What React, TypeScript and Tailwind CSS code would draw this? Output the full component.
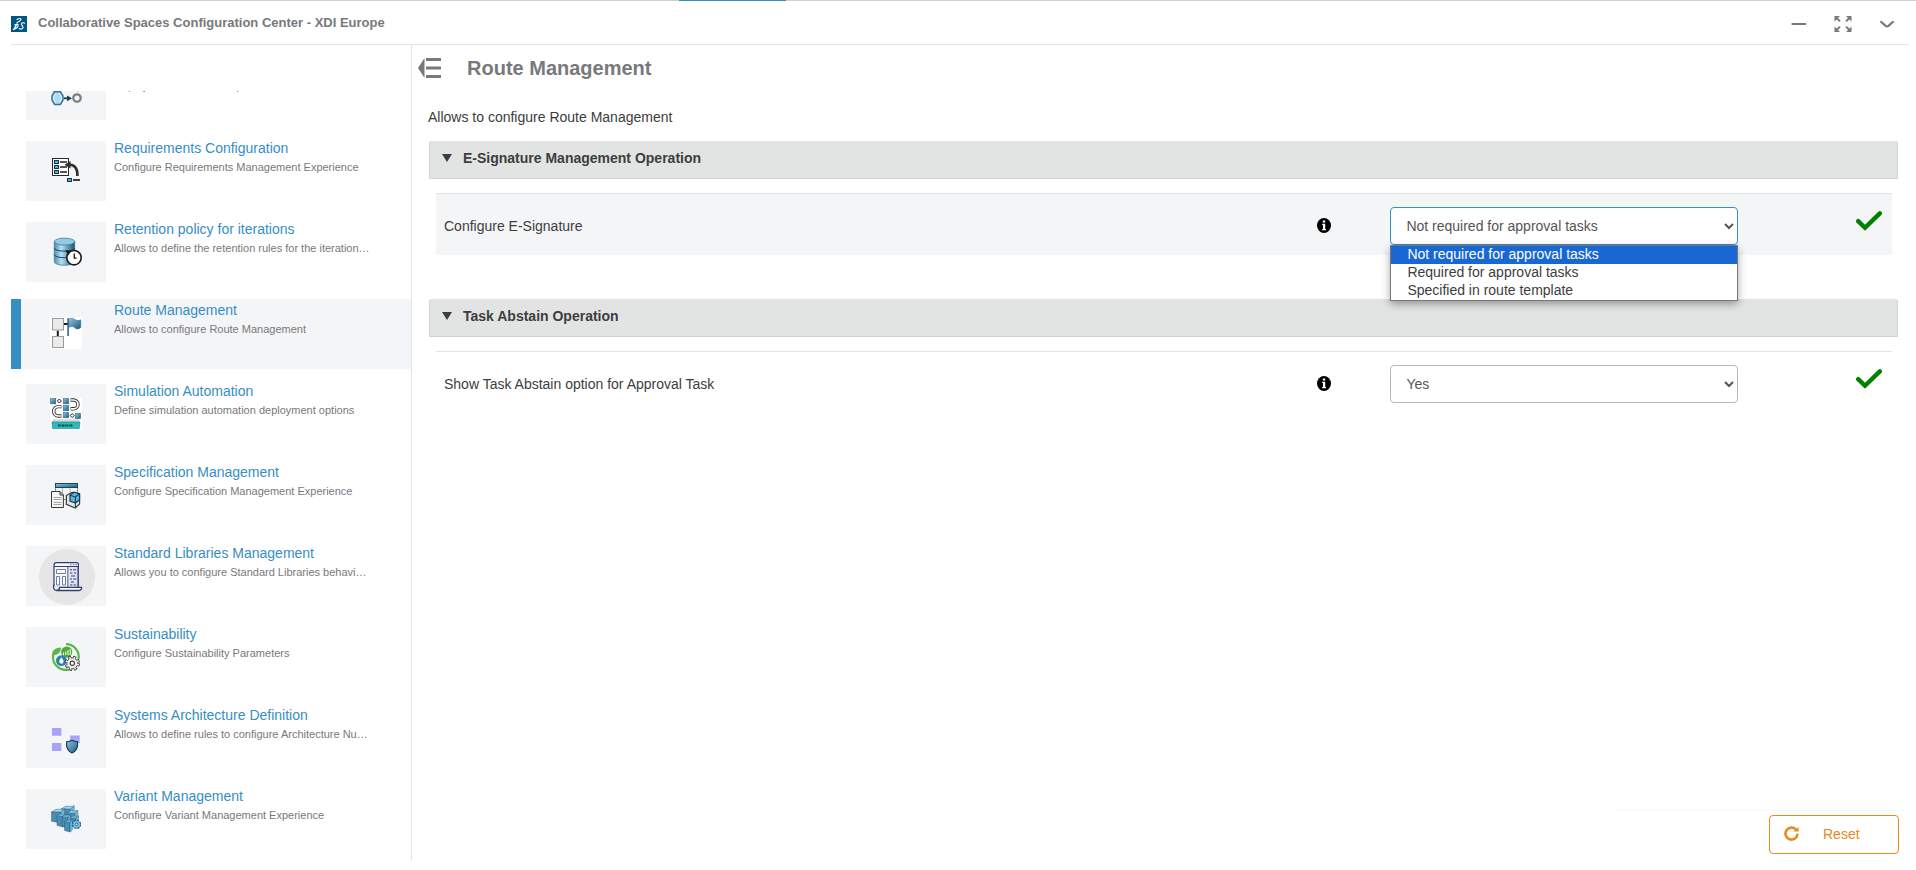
import { useState } from "react";
import type { ReactNode } from "react";

const BlueDefs = ({ id }: { id: string }) => (
  <defs>
    <linearGradient id={id} x1="0" y1="0" x2="1" y2="1">
      <stop offset="0" stopColor="#8fc9e6" />
      <stop offset="1" stopColor="#1f5878" />
    </linearGradient>
  </defs>
);

const Icon32 = ({ children, white }: { children: ReactNode; white?: boolean }) => (
  <svg viewBox="0 0 32 32" aria-hidden="true" className={white ? "size-8 bg-white" : "size-8"}>
    {children}
  </svg>
);

const DeployIcon = () => (
  <Icon32>
    <path d="M4.6 17.8H10.4L13 22V26L10.4 30.4H4.6L2 26V22Z" fill="#a9dcf8" stroke="#41708a" strokeWidth="1.5" />
    <path d="M5.4 19.5 3.8 22.4V25.6L5.4 28.6M9.6 19.5 11.2 22.4V25.6L9.6 28.6" fill="none" stroke="#e6f5fd" strokeWidth="1" />
    <path d="M14 24.3h3.5" stroke="#16405a" strokeWidth="1.8" />
    <path d="M17 21.4 22 24.3 17 27.2Z" fill="#16405a" />
    <circle cx="27" cy="24" r="3.7" fill="#f4f5f6" stroke="#7d7d7d" strokeWidth="2.3" />
    <path d="M3 16.6 4.6 17.8M26.4 16l1.2 1.4" stroke="#555" strokeWidth="1" />
  </Icon32>
);

const RequirementsIcon = () => (
  <Icon32>
    <rect x="2.5" y="3.5" width="16" height="17" fill="#fff" stroke="#2a2a2a" />
    {[5, 10, 15].map((y) => (
      <g key={y}>
        <rect x="4.5" y={y + 0.5} width="4" height="3" fill="#57a9d6" stroke="#12354c" />
        <path d={`M10 ${y + 2}h7`} stroke="#2a2a2a" strokeWidth="1.6" />
      </g>
    ))}
    <path d="M20 9.8C25.5 10.2 27.6 14 27.4 21" fill="none" stroke="#2d2d2d" strokeWidth="2.6" />
    <path d="M14.5 9.8 20.5 6V13.6Z" fill="#2d2d2d" />
    <rect x="17.5" y="23.5" width="4" height="3" fill="#57a9d6" stroke="#12354c" />
    <path d="M23 25h7" stroke="#2a2a2a" strokeWidth="1.8" />
  </Icon32>
);

const RetentionIcon = () => (
  <Icon32>
    <defs>
      <linearGradient id="cylinder">
        <stop offset="0" stopColor="#4f8fb3" />
        <stop offset="0.35" stopColor="#b4e0f5" />
        <stop offset="1" stopColor="#1d4f6e" />
      </linearGradient>
    </defs>
    <path d="M4.3 5.5v20c0 5 20.4 5 20.4 0v-20Z" fill="url(#cylinder)" stroke="#3a6f8e" strokeWidth="0.7" />
    <ellipse cx="14.5" cy="5.6" rx="10.2" ry="3.5" fill="#92cbe8" stroke="#3a6f8e" strokeWidth="0.7" />
    <path d="M4.3 12c0 4.2 20.4 4.2 20.4 0M4.3 18.5c0 4.2 20.4 4.2 20.4 0" fill="none" stroke="#1c4660" strokeWidth="1" />
    <circle cx="24" cy="21.7" r="7.2" fill="#fff" stroke="#1b1b1b" strokeWidth="1.6" />
    <path d="M24.3 17.5v4.6h2.4" fill="none" stroke="#222" strokeWidth="1.4" />
    <path d="M15 14.6 20 14.4 18.8 19.4Z" fill="#1b1b1b" />
  </Icon32>
);

const RouteIcon = () => (
  <Icon32 white>
    <BlueDefs id="flag" />
    <rect x="2.5" y="1.5" width="11" height="11.5" fill="#ebebeb" stroke="#9a9a9a" />
    <rect x="2.5" y="19.5" width="11" height="11" fill="#ebebeb" stroke="#9a9a9a" />
    <path d="M14 7h4M7.8 13.7v5.4" stroke="#1c1c1c" strokeWidth="2" />
    <path d="M18.6 2C21.6 .6 23.4 1.2 25 2.6 26.8 4 28.6 3.8 30.8 2.8V10.4C28.6 12.4 26 12.4 24.6 10.8 23 9 20.6 9 18.6 10.6Z" fill="url(#flag)" stroke="#2b6a8c" strokeWidth="0.5" />
    <path d="M18.1 1.2V19" stroke="#2b6a8c" strokeWidth="1.6" />
  </Icon32>
);

const SimulationIcon = () => (
  <Icon32 white>
    <BlueDefs id="sim" />
    {[[0.3, 0.4], [13.2, 0.4], [13.2, 7.3], [13.2, 14.3], [25.2, 15.2]].map(([x, y]) => (
      <rect key={`${x}-${y}`} x={x} y={y} width="5.5" height="5.5" fill="url(#sim)" stroke="#2b6788" strokeWidth="0.5" />
    ))}
    <path d="M9.3 1 11.3 3 9.3 5 7.3 3ZM22.2 15.6 24.2 17.6 22.2 19.6 20.2 17.6Z" fill="#fff" stroke="#222" strokeWidth="1" />
    <path d="M11.4 8.6H8.4a4.7 4.7 0 0 0 0 9.4h3M20.6 2h3a4.4 4.4 0 0 1 0 8.8h-3" fill="none" stroke="#333" strokeWidth="3.4" />
    <path d="M11 8.6H8.4a4.7 4.7 0 0 0 0 9.4H11M21 2h2.6a4.4 4.4 0 0 1 0 8.8H21" fill="none" stroke="#fff" strokeWidth="1.7" />
    <path d="M3 21.2H29L30 24H2Z" fill="#d5d8d8" />
    <path d="M2 24H30L29.2 30.6H2.6Z" fill="#2bbcb9" stroke="#157c7d" strokeWidth="0.6" />
    <path d="M8 27.5h1.8m.6 0h.9m.6 0h2m.6 0h1.4m.7 0h1.4m.7 0h1m.6 0h2" stroke="#0c3d40" strokeWidth="1.8" />
  </Icon32>
);

const SpecificationIcon = () => (
  <Icon32>
    <BlueDefs id="spec" />
    <rect x="5.5" y="4.5" width="22" height="16" fill="#f3f3f3" stroke="#8b9093" />
    <path d="M12.5 9v11M20 9v11" stroke="#b5b9bb" />
    <rect x="5.5" y="4.5" width="22" height="4" fill="url(#spec)" stroke="#15455f" />
    <path d="M1.5 12.5H10L13.4 16V28.5H1.5Z" fill="#f5f5f5" stroke="#3a3a3a" />
    <path d="M10 12.5V16h3.4" fill="none" stroke="#3a3a3a" />
    <path d="M3.5 18.5h8M3.5 20.5h8M3.5 23.5h8M3.5 25.5h8" stroke="#a3a3a3" />
    <path d="M16.4 16.4 22 13.3 29.6 15V25L25.3 29 16.4 25.4Z" fill="#e6e6e6" stroke="#3c3c3c" strokeWidth="1.2" />
    <path d="M20 16 24 13.2 29.5 14.6V21L25.4 24 20 22Z" fill="#62b5df" stroke="#113f59" strokeWidth="1.2" />
    <path d="M20 16.2 25.4 18 29.5 14.8M25.4 18v6M25.4 24v4.6" fill="none" stroke="#113f59" strokeWidth="1.1" />
  </Icon32>
);

const LibrariesIcon = () => (
  <svg viewBox="0 0 60 60" aria-hidden="true" className="size-[60px]">
    <circle cx="31" cy="31" r="28" fill="#e6e6e6" />
    <path d="M18 40V19.2Q18 16.6 20.4 16.6H40.6Q42.4 16.6 42.4 18.6V41" fill="#f7f8fc" stroke="#2f3e75" strokeWidth="1.2" />
    <path d="M31.6 20.5H42V41H31.6Z" fill="#e3e6f2" />
    <path d="M18 20.5H42.4" stroke="#2f3e75" />
    <path d="M34 18.6h1.6m1 0h1.6m1 0h1.6" stroke="#8b95bd" strokeWidth="1.2" />
    <path d="M20.5 23.5h9v4h-9ZM20.5 30.5h3V39h-3ZM26.5 30.5h3V39h-3Z" fill="#fff" stroke="#6d79a8" />
    <path d="M31.8 21V41M41.6 21v20" stroke="#7884b3" strokeWidth="1.4" />
    <path d="M34 23.8h2m1 0h3M34 27h2.4m1.6 0h2M35 30h4M34 33h2m1.2 0h3M35 36h3M34 39h2.4m1.2 0h2.4" stroke="#2f3e75" strokeWidth="1" />
    <path d="M18 38.5C17 42 18 44.3 20.4 44.4 22.4 44.4 23.6 43.4 23.6 41.4H45.6C45.8 43.6 44.4 44.5 42.4 44.5H20.4" fill="#fff" stroke="#2f3e75" strokeWidth="1.3" />
  </svg>
);

const SustainabilityIcon = () => (
  <Icon32>
    <path d="M16 3.2A12.8 12.8 0 0 1 28.6 18M3.2 14A12.8 12.8 0 0 0 19 28.5" fill="none" stroke="#57b847" strokeWidth="2.2" />
    <path d="M2 16C1.6 9.6 4.4 6.6 11 6.4 11 11 8.4 13.4 4.6 14Z" fill="#57b847" />
    <circle cx="16.7" cy="11" r="5.6" fill="#4caa35" />
    <path d="M13.5 14v-2.4M15.8 14v-3.6M18 14V9.2M20.2 14V8" stroke="#fff" strokeWidth="1" />
    <circle cx="11.4" cy="19.6" r="5.4" fill="#2d80b4" />
    <path d="M11.4 16.2C13.4 19 13.8 20 13.4 21.2A2.1 2.1 0 0 1 9.4 21.2C9 20 9.4 19 11.4 16.2Z" fill="#fff" />
    <circle cx="22.3" cy="22.3" r="6" fill="none" stroke="#444" strokeWidth="3.4" strokeDasharray="2.9 1.812" />
    <circle cx="22.3" cy="22.3" r="5.5" fill="#ededed" stroke="#444" strokeWidth="1" />
    <circle cx="22.3" cy="22.3" r="5.8" fill="none" stroke="#ededed" strokeWidth="2" strokeDasharray="1.5 3.055" strokeDashoffset="-0.7" />
    <circle cx="22.3" cy="22.3" r="2.1" fill="#fff" stroke="#444" strokeWidth="1.2" />
  </Icon32>
);

const SystemsIcon = () => (
  <Icon32>
    <BlueDefs id="shield" />
    <path d="M2 6h9.4v7.8H2ZM2 21h9.4v8H2ZM20.2 13.4h9.5V21h-9.5Z" fill="#a7a3fb" />
    <path d="M16.6 19.8Q19.8 19.6 22 18.2 24.2 19.6 27.6 19.8 28.6 28 22 31 15.6 28 16.6 19.8Z" fill="url(#shield)" stroke="#163f58" strokeWidth="1.1" />
  </Icon32>
);

const Block = ({ x, y, w, h }: { x: number; y: number; w: number; h: number }) => (
  <g stroke="#1d4d68" strokeWidth="0.4">
    <path d={`M${x} ${y}l${w * 0.4} ${-w * 0.25}h${w * 0.8}l${-w * 0.35} ${w * 0.3}Z`} fill="#9ad8f5" />
    <path d={`M${x} ${y}h${w * 0.85}v${h}l${-w * 0.85} ${-h * 0.15}Z`} fill="#4a8db3" />
    <path d={`M${x + w * 0.85} ${y}l${w * 0.35} ${-w * 0.3}v${h}l${-w * 0.35} ${w * 0.3}Z`} fill="#6dbce0" />
  </g>
);

const VariantIcon = () => (
  <Icon32>
    <Block x={11} y={6} w={11} h={10} />
    <Block x={1.5} y={9} w={11} h={11} />
    <Block x={17} y={10} w={9} h={9} />
    <Block x={7} y={13} w={7} h={11} />
    <Block x={12} y={14} w={7} h={11} />
    <Block x={20} y={15} w={7} h={9} />
    <Block x={14.5} y={19} w={6.5} h={10} />
    <circle cx="26.6" cy="21.4" r="4" fill="#7cc8ec" stroke="#235a78" strokeWidth="1.2" strokeDasharray="2.2 0.9" />
    <circle cx="26.6" cy="21.4" r="1.4" fill="#d9eef9" stroke="#143f58" strokeWidth="0.8" />
  </Icon32>
);

type Entry = { title: string; text: string; icon: ReactNode };

const entries: Entry[] = [
  { title: "Product Deployment", text: "Deploy structure relation policies", icon: <DeployIcon /> },
  { title: "Requirements Configuration", text: "Configure Requirements Management Experience", icon: <RequirementsIcon /> },
  { title: "Retention policy for iterations", text: "Allows to define the retention rules for the iterations of objects", icon: <RetentionIcon /> },
  { title: "Route Management", text: "Allows to configure Route Management", icon: <RouteIcon /> },
  { title: "Simulation Automation", text: "Define simulation automation deployment options", icon: <SimulationIcon /> },
  { title: "Specification Management", text: "Configure Specification Management Experience", icon: <SpecificationIcon /> },
  { title: "Standard Libraries Management", text: "Allows you to configure Standard Libraries behavior settings", icon: <LibrariesIcon /> },
  { title: "Sustainability", text: "Configure Sustainability Parameters", icon: <SustainabilityIcon /> },
  { title: "Systems Architecture Definition", text: "Allows to define rules to configure Architecture Numbering", icon: <SystemsIcon /> },
  { title: "Variant Management", text: "Configure Variant Management Experience", icon: <VariantIcon /> },
];

const Sidebar = () => {
  const [selected, setSelected] = useState("Route Management");
  return (
    <nav className="w-[401px] shrink-0 overflow-hidden border-r border-[#e2e4e3] pt-[46px]">
      <div className="h-full overflow-hidden">
        <ul className="-mt-[35px] flex flex-col gap-[11px]">
          {entries.map(({ title, text, icon }) => (
            <li key={title}>
              <a
                href="#"
                onClick={(e) => {
                  e.preventDefault();
                  setSelected(title);
                }}
                className={
                  title === selected
                    ? "flex h-[70px] gap-2 border-l-10 border-[#368ec4] bg-[#f4f5f7] pt-1 pl-[5px]"
                    : "flex h-[70px] gap-2 border-l-10 border-transparent pt-1 pl-[5px]"
                }
              >
                <span className="flex h-[60px] w-20 shrink-0 items-center justify-center bg-[#f4f5f7]">{icon}</span>
                <span className="flex w-[256px] flex-col">
                  <span className="-mt-[3px] text-sm/5 text-[#368ec4]">{title}</span>
                  <span className="truncate text-[11px]/[18px] text-[#77797c]">{text}</span>
                </span>
              </a>
            </li>
          ))}
        </ul>
      </div>
    </nav>
  );
};

const InfoIcon = () => (
  <svg viewBox="0 0 14 15" role="img" aria-label="Information" className="h-[15px] w-3.5">
    <ellipse cx="7" cy="7.5" rx="7" ry="7.5" fill="#000" />
    <path d="M5.8 2.6h2.4v2H5.8ZM5.2 5.8h3v5.2h.8v1.2H5.2V11H6V7h-.8Z" fill="#fff" />
  </svg>
);

const CheckIcon = () => (
  <svg viewBox="0 0 26 20" role="img" aria-label="Saved" className="h-5 w-[26px]">
    <path d="M2.2 10.2 9 16.8 23.8 2.4" fill="none" stroke="#008000" strokeWidth="4.4" strokeLinecap="round" />
  </svg>
);

type SettingProps = {
  heading: string;
  id: string;
  label: string;
  options: string[];
  opened?: boolean;
};

const Setting = ({ heading, id, label, options, opened }: SettingProps) => {
  const [open, setOpen] = useState(!!opened);
  const [value, setValue] = useState(options[0]);
  return (
    <section>
      <h2>
        <button
          type="button"
          className="flex h-[38px] w-full items-start gap-[11px] rounded-t-[3px] border-x border-b border-[#d1d4d4] bg-[#e2e4e3] pt-[7px] pl-3 text-left text-sm/5 font-bold text-[#3d3d3d]"
        >
          <svg viewBox="0 0 10 8" aria-hidden="true" className="mt-1.5 h-2 w-2.5">
            <path d="M0 0h10L5 8Z" fill="#3d3d3d" />
          </svg>
          {heading}
        </button>
      </h2>
      <div
        className={
          opened
            ? "mt-3.5 mr-1.5 ml-[7px] grid grid-cols-[60%_5%_25%_10%] border-t border-[#e2e4e3] bg-[#f4f5f7] pt-[13px] pb-2.5"
            : "mt-3.5 mr-1.5 ml-[7px] grid grid-cols-[60%_5%_25%_10%] border-t border-[#e2e4e3] pt-[13px] pb-2.5"
        }
      >
        <label htmlFor={id} className="flex items-center px-2">
          {label}
        </label>
        <div className="flex items-center px-[7px] pb-px">
          <InfoIcon />
        </div>
        <div className="relative px-2">
          <select
            id={id}
            value={value}
            onChange={(e) => setValue(e.target.value)}
            className={
              opened
                ? "block h-[38px] w-full rounded-[4px] border border-[#368ec4] bg-white px-[11px] text-[#555]"
                : "block h-[38px] w-full rounded-[4px] border border-[#b4b6ba] bg-white px-[11px] text-[#555]"
            }
          >
            {options.map((o) => (
              <option key={o}>{o}</option>
            ))}
          </select>
          {open && (
            <ul
              role="listbox"
              aria-label={label}
              className="absolute inset-x-2 top-full border border-[#767676] bg-white text-sm/4 shadow-[0_3px_8px_rgba(0,0,0,0.35)]"
            >
              {options.map((o) => (
                <li
                  key={o}
                  role="option"
                  aria-selected={o === value}
                  onClick={() => {
                    setValue(o);
                    setOpen(false);
                  }}
                  className={o === value ? "bg-[#1967d2] px-4 pb-0.5 text-white" : "px-4 pb-0.5"}
                >
                  {o}
                </li>
              ))}
            </ul>
          )}
        </div>
        <div className="flex justify-end pt-1 pr-2.5">
          <CheckIcon />
        </div>
      </div>
    </section>
  );
};

export default function App() {
  return (
    <div className="flex h-screen flex-col bg-white pb-2.5 font-['Liberation_Sans',Arial,sans-serif] text-sm text-[#3d3d3d]">
      <div className="flex h-px shrink-0 bg-[#ced1d1]">
        <div className="ml-[679px] w-[107px] bg-[#368ec4]" />
      </div>
      <header className="mr-[7px] ml-[11px] flex h-11 shrink-0 items-center gap-[11px] border-b border-[#e2e4e3] pt-0.5 text-[#77797c]">
        <svg viewBox="0 0 16 16" aria-hidden="true" className="size-4">
          <rect width="16" height="16" fill="#005686" />
          <path
            d="M6 3.4C8.4 2 10.6 2.4 9.8 3.8 9.2 5 7.6 6 6 6.6M2.4 13.4C5.4 12.8 7.6 10.4 7.2 9 6.8 7.8 5 8 3.8 9M5.8 8.4 2.8 13.4M13.6 7.2C12.2 6.2 10.2 6.8 10.4 8.2 10.6 9.6 12.6 10 12 11.8 11.4 13.2 9.4 13.4 8.2 12.6"
            fill="none"
            stroke="#fff"
            strokeWidth="1.1"
            strokeLinecap="round"
          />
        </svg>
        <h1 className="mb-0.5 grow text-[13px]/5 font-bold">Collaborative Spaces Configuration Center - XDI Europe</h1>
        <div className="mr-3.5 flex items-center gap-[27px]">
          <button type="button" aria-label="Minimize">
            <svg viewBox="0 0 16 16" className="size-4">
              <path d="M.6 8h14.6" stroke="#77797c" strokeWidth="2" />
            </svg>
          </button>
          <button type="button" aria-label="Maximize">
            <svg viewBox="0 0 18 16" className="h-4 w-[18px]">
              <path d="M2 1.5 6 5.4M16 1.5 12 5.4M2 14.5 6 10.6M16 14.5 12 10.6" stroke="#77797c" strokeWidth="2" />
              <path d="M.5 0H6L.5 5.5ZM17.5 0H12l5.5 5.5ZM.5 16H6L.5 10.5ZM17.5 16H12l5.5-5.5Z" fill="#77797c" />
            </svg>
          </button>
          <button type="button" aria-label="More">
            <svg viewBox="0 0 16 16" className="size-4">
              <path d="M1.4 5.2 6.6 9.8Q8 10.8 9.4 9.8L14.6 5.2" fill="none" stroke="#77797c" strokeWidth="2.2" />
            </svg>
          </button>
        </div>
      </header>
      <div className="ml-[11px] flex min-h-0 grow">
        <Sidebar />
        <main className="flex grow flex-col">
          <div className="flex items-center gap-[26px] pt-[11px] pl-1.5">
            <button type="button" aria-label="Collapse panel">
              <svg viewBox="0 0 23 20" className="h-5 w-[23px]">
                <path d="M6.5 0V20L0 10Z" fill="#77797c" />
                <path d="M8 1.5h15M8 10h15M8 18.5h15" stroke="#77797c" strokeWidth="3" />
              </svg>
            </button>
            <h2 className="text-xl/6 font-bold text-[#77797c]">Route Management</h2>
          </div>
          <p className="pt-[27px] pl-4 text-sm/5">Allows to configure Route Management</p>
          <div className="mt-3.5 mr-[18px] ml-[17px] flex flex-col gap-11">
            <Setting
              heading="E-Signature Management Operation"
              id="e-signature"
              label="Configure E-Signature"
              options={["Not required for approval tasks", "Required for approval tasks", "Specified in route template"]}
              opened
            />
            <Setting
              heading="Task Abstain Operation"
              id="task-abstain"
              label="Show Task Abstain option for Approval Task"
              options={["Yes", "No"]}
            />
          </div>
          <footer className="mt-auto mr-3 flex w-[290px] justify-end self-end border-t border-[#f8f8f8] pt-1 pr-[5px] pb-1.5">
            <button
              type="button"
              className="flex h-[39px] w-[130px] items-center gap-6 rounded-[4px] border border-[#e88a1c] pb-0.5 pl-3.5 text-[#e88a1c]"
            >
              <svg viewBox="0 0 15 15" aria-hidden="true" className="size-[15px]">
                <path d="M12 3.6A6 6 0 1 0 13.5 7.8" fill="none" stroke="#e88a1c" strokeWidth="2.6" />
                <path d="M14.6 1V5.6H9.6Z" fill="#e88a1c" />
              </svg>
              Reset
            </button>
          </footer>
        </main>
      </div>
    </div>
  );
}
